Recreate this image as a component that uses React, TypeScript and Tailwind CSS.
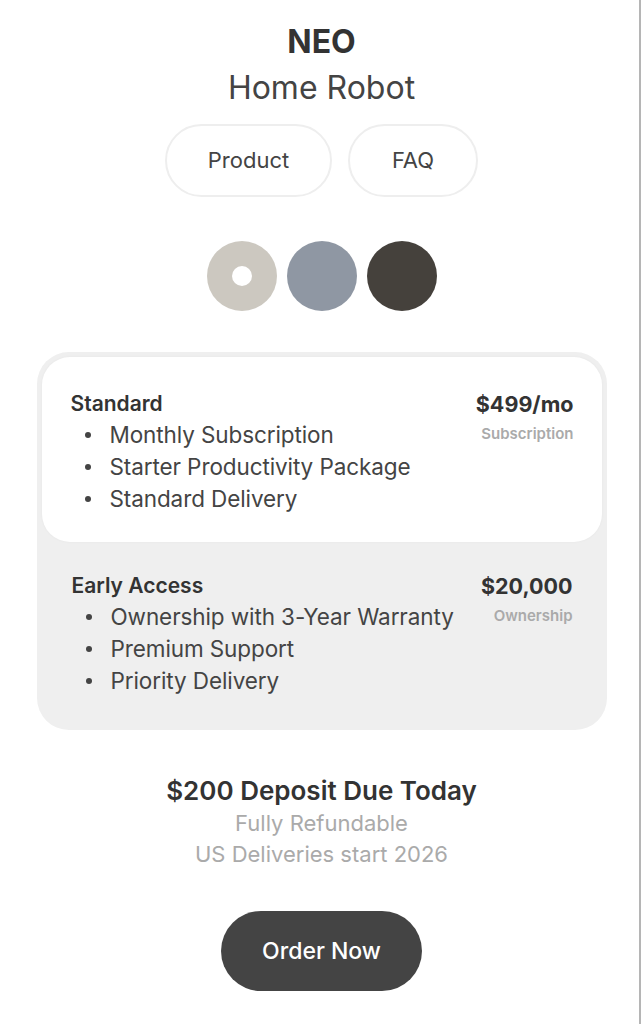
const PLANS = [
  {
    name: "Standard",
    price: "$499/mo",
    kind: "Subscription",
    items: ["Monthly Subscription", "Starter Productivity Package", "Standard Delivery"],
    active: true,
  },
  {
    name: "Early Access",
    price: "$20,000",
    kind: "Ownership",
    items: ["Ownership with 3-Year Warranty", "Premium Support", "Priority Delivery"],
    active: false,
  },
];

function Plan({ plan }: { plan: (typeof PLANS)[number] }) {
  return (
    <div
      className={
        plan.active
          ? "bg-white rounded-[28px] pl-[29px] pr-[28px] pt-[32px] pb-[27px] shadow-[0_0_3px_rgba(0,0,0,0.04)]"
          : "pl-[30px] pr-[29px] pt-[29px] pb-[28px]"
      }
    >
      <div className="flex justify-between items-start">
        <div>
          <div className="text-[21px] leading-[30px] font-semibold text-[#333]">{plan.name}</div>
          <ul>
            {plan.items.map((it) => (
              <li key={it} className="flex items-center text-[22.5px] leading-[32px] text-[#444] tracking-[-0.1px]">
                <span className="w-[6px] h-[6px] rounded-full bg-[#444] ml-[14px] mr-[19px]" />
                {it}
              </li>
            ))}
          </ul>
        </div>
        <div className="text-right">
          <div className="text-[21.5px] leading-[30px] font-bold text-[#333]">{plan.price}</div>
          <div className="text-[15px] leading-[30px] font-semibold text-[#aaa]">{plan.kind}</div>
        </div>
      </div>
    </div>
  );
}

export default function App() {
  return (
    <div className="w-[641px] min-h-[1024px] bg-white flex" style={{ fontFamily: "Inter, 'Liberation Sans', sans-serif" }}>
      <div className="flex-1 pl-[4px] border-r-2 border-[#b5b5b5] flex flex-col items-center pt-[24px]">
        <h1 className="text-[32px] leading-[36px] font-bold text-[#333]">NEO</h1>
        <h2 className="text-[32px] leading-[40px] text-[#444] mt-[8px]">Home Robot</h2>

        <div className="flex gap-[16px] mt-[16px]">
          <button className="w-[167px] h-[73px] rounded-full border-2 border-[#eeeeee] text-[22px] text-[#444]">
            Product
          </button>
          <button className="w-[130px] h-[73px] rounded-full border-2 border-[#eeeeee] text-[22px] text-[#444]">
            FAQ
          </button>
        </div>

        <div className="flex gap-[10px] mt-[44px]">
          <div className="w-[70px] h-[70px] rounded-full bg-[#ccc8c0] flex items-center justify-center">
            <div className="w-[20px] h-[20px] rounded-full bg-white" />
          </div>
          <div className="w-[70px] h-[70px] rounded-full bg-[#8f97a3]" />
          <div className="w-[70px] h-[70px] rounded-full bg-[#45413c]" />
        </div>

        <div className="w-[570px] mt-[41px] bg-[#efefef] rounded-[32px] p-[5px]">
          {PLANS.map((p) => (
            <Plan key={p.name} plan={p} />
          ))}
        </div>

        <div className="mt-[44px] text-[26px] leading-[34px] font-semibold text-[#333]">$200 Deposit Due Today</div>
        <div className="text-[22px] leading-[31px] text-[#aaa]">Fully Refundable</div>
        <div className="text-[22px] leading-[31px] text-[#aaa]">US Deliveries start 2026</div>

        <button className="mt-[41px] w-[201px] h-[80px] rounded-full bg-[#444] text-white text-[23px] font-medium">
          Order Now
        </button>
      </div>
    </div>
  );
}
